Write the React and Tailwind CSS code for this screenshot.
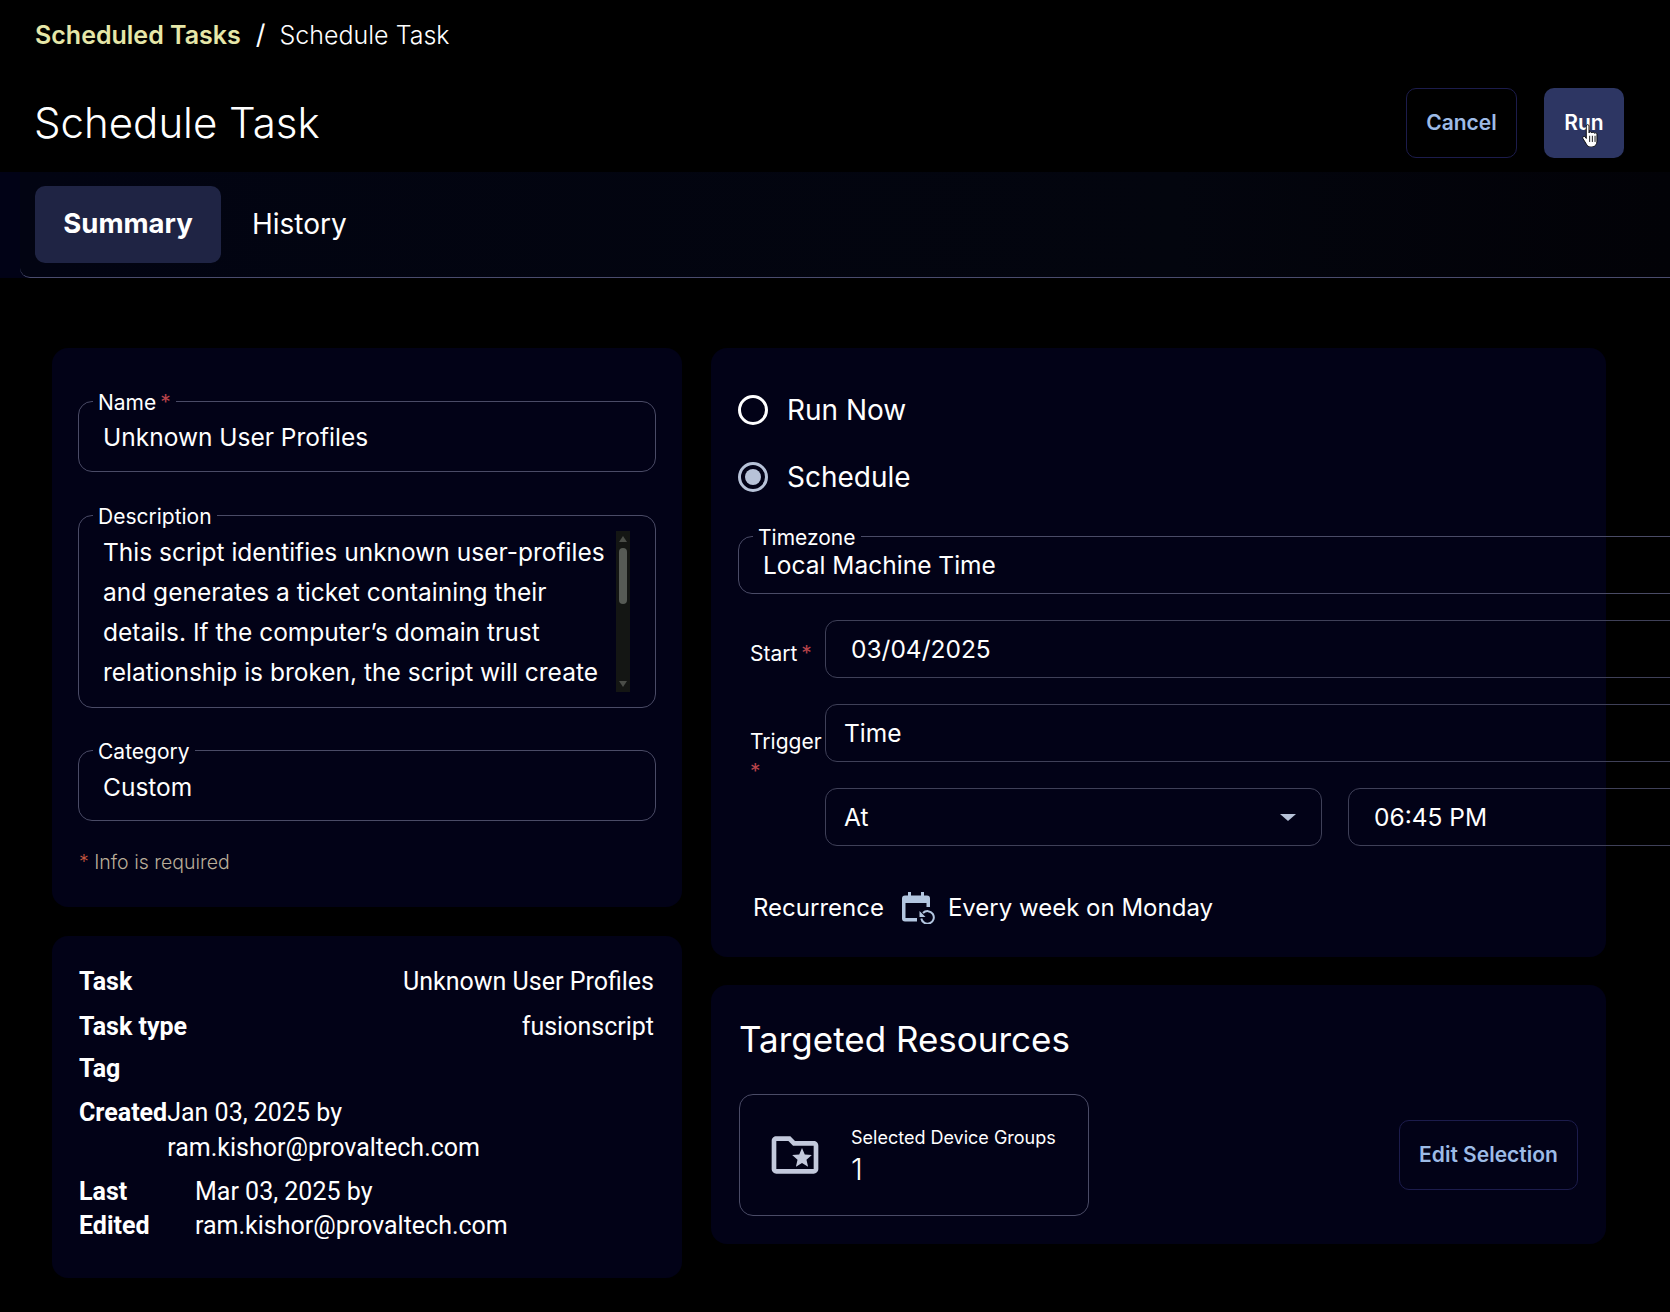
import React from "react";

function Field({ label, required, className, children }) {
  return (
    <fieldset className={`border border-[#4a4b66] rounded-[14px] ${className}`}>
      <legend className="ml-[14px] px-[5px] text-[21px] leading-[24px] font-normal text-white translate-y-[2px]">
        {label}
        {required && <span className="text-[#b8434a] ml-[4px]">*</span>}
      </legend>
      <div className="pl-[24px]">{children}</div>
    </fieldset>
  );
}

function InfoRow({ label, children, labelWidth, right, rowClass }) {
  return (
    <div className={`flex ${right ? "justify-between" : ""} ${rowClass}`}>
      <div className={`font-bold shrink-0 ${labelWidth}`}>{label}</div>
      <div>{children}</div>
    </div>
  );
}

function Box({ className, children }) {
  return (
    <div className={`border border-[#3f4058] rounded-[12px] h-[58px] flex items-center ${className}`}>
      {children}
    </div>
  );
}

function App() {
  return (
    <div className="w-[1670px] h-[1312px] overflow-hidden bg-black text-white font-['Inter',sans-serif]">
      <div className="pl-[35px] pt-[20px] h-[88px] text-[25px] leading-[30px] flex items-start">
        <span className="font-semibold text-[#e6e7a9]">Scheduled Tasks</span>
        <span className="ml-[15px] mr-[14px] text-[27px]">/</span>
        <span className="font-light">Schedule Task</span>
      </div>

      <div className="flex justify-between items-center pl-[34px] pr-[46px] h-[70px] mb-[14px]">
        <h1 className="text-[42px] font-light leading-[50px]">Schedule Task</h1>
        <div className="flex gap-[27px]">
          <button className="w-[111px] h-[70px] rounded-[10px] border border-[#1c1c4c] text-[#9dbbe6] text-[21px] font-semibold">
            Cancel
          </button>
          <button className="relative w-[80px] h-[70px] rounded-[10px] bg-[#2d3663] text-white text-[21px] font-semibold">
            Run
            <svg className="absolute left-[38px] top-[36px]" width="17" height="23" viewBox="1.500 0.500 14.500 20.500">
              <path
                d="M5 2.200c0-1.500 2.400-1.500 2.400 0v6.200c.3-1.300 2.400-1.200 2.500.1.400-1 2.300-.9 2.400.3.500-.7 2.200-.5 2.200.8v6.200c0 2.800-1.600 5.200-4.600 5.200H9c-1.900 0-3-.9-3.900-2.500L2 13.400c-.7-1.400 1-2.500 2-1.400l1 1.400z"
                fill="#fff"
                stroke="#000"
                strokeWidth="0.8"
              />
              <path d="M8 11v5.500M10.400 11v5.500M12.800 11v5.500" stroke="#000" strokeWidth="0.8" />
            </svg>
          </button>
        </div>
      </div>

      <div className="h-[106px] bg-[#010216]">
        <div className="ml-[20px] h-[106px] bg-linear-to-r from-[#020412] via-[#03050e] via-70% to-[#020207] border-b border-[#4a4c6e] rounded-bl-[10px] pl-[15px] pt-[14px] flex items-start gap-[31px]">
          <div className="w-[186px] h-[77px] pb-[1px] rounded-[10px] bg-[#1f2444] flex items-center justify-center text-[27.500px] font-bold">
            Summary
          </div>
          <div className="h-[77px] pb-[2px] flex items-center text-[28px]">History</div>
        </div>
      </div>

      <div className="pl-[52px] pt-[70px] grid grid-cols-[630px_895px] gap-x-[29px] items-start">
        <div className="flex flex-col gap-[29px]">
          <div className="bg-[#020217] rounded-[16px] h-[559px] pt-[41px] px-[26px]">
            <Field label="Name" required className="h-[83px]">
              <div className="text-[24.500px] leading-[36px] pt-[6px]">Unknown User Profiles</div>
            </Field>
            <Field label="Description" className="mt-[31px] h-[205px] relative">
              <div className="text-[24.500px] leading-[40px] w-[512px] h-[160px] pt-[5px] overflow-hidden box-content">
                This script identifies unknown user-profiles and generates a ticket containing their details. If the
                computer’s domain trust relationship is broken, the script will create
              </div>
              <div className="absolute right-[25px] top-[4px] w-[14px] h-[161px] bg-[#141614] flex flex-col items-center">
                <div className="mt-[5px] border-x-[4px] border-x-transparent border-b-[6px] border-b-[#4a4d48]" />
                <div className="mt-[6px] w-[8px] h-[56px] rounded-[4px] bg-[#565a55]" />
                <div className="mt-auto mb-[5px] border-x-[4px] border-x-transparent border-t-[6px] border-t-[#4a4d48]" />
              </div>
            </Field>
            <Field label="Category" className="mt-[30px] h-[83px]">
              <div className="text-[24.500px] leading-[36px] pt-[7px]">Custom</div>
            </Field>
            <div className="mt-[29px] ml-[1px] text-[19.500px] leading-[24px] font-light text-[#b9ad98]">
              <span className="text-[#c4553f]">*</span> Info is required
            </div>
          </div>

          <div className="bg-[#020217] rounded-[16px] h-[342px] pt-[28px] pl-[27px] pr-[28px] text-[25px] leading-[35px] font-['Roboto',sans-serif]">
            <InfoRow label="Task" right rowClass="mb-[10px]">Unknown User Profiles</InfoRow>
            <InfoRow label="Task type" right rowClass="mb-[7px]">fusionscript</InfoRow>
            <InfoRow label="Tag" rowClass="mb-[9px]" />
            <InfoRow label="Created" rowClass="mb-[10px]">
              Jan 03, 2025 by
              <br />
              ram.kishor@provaltech.com
            </InfoRow>
            <InfoRow label="Last Edited" labelWidth="w-[116px]" rowClass="leading-[34px]">
              Mar 03, 2025 by
              <br />
              ram.kishor@provaltech.com
            </InfoRow>
          </div>
        </div>

        <div className="flex flex-col gap-[28px]">
          <div className="bg-[#020217] rounded-[16px] h-[609px] pt-[47px] pl-[27px]">
            <div className="flex items-center gap-[19px] h-[30px] text-[28px]">
              <span className="w-[30px] h-[30px] rounded-full border-[3px] border-white" />
              Run Now
            </div>
            <div className="flex items-center gap-[19px] h-[30px] mt-[37px] text-[28px]">
              <span className="w-[30px] h-[30px] rounded-full border-[3px] border-[#b7c2d8] flex items-center justify-center">
                <span className="w-[16px] h-[16px] rounded-full bg-[#b7c2d8]" />
              </span>
              Schedule
            </div>

            <fieldset className="mt-[32px] w-[1100px] h-[70px] border border-[#4a4b66] rounded-[14px]">
              <legend className="ml-[14px] px-[5px] text-[21px] leading-[24px] translate-y-[2px]">Timezone</legend>
              <div className="pl-[24px] text-[24.500px] leading-[32px] mt-[1px]">Local Machine Time</div>
            </fieldset>

            <div className="flex items-center w-[1100px] mt-[26px]">
              <div className="w-[87px] pl-[12px] pt-[10px] text-[21px]">
                Start<span className="text-[#b8434a] ml-[4px]">*</span>
              </div>
              <Box className="flex-1 pl-[25px] text-[24.500px]">03/04/2025</Box>
            </div>

            <div className="flex w-[1100px] mt-[26px]">
              <div className="w-[87px] pl-[12px] pt-[24px] text-[21px] leading-[28px]">
                Trigger
                <div className="text-[#b8434a] mt-[2px]">*</div>
              </div>
              <div className="flex-1">
                <Box className="pl-[18px] text-[24.500px]">Time</Box>
                <div className="flex gap-[26px] mt-[26px]">
                  <Box className="w-[497px] justify-between pl-[18px] pr-[25px] text-[24.500px]">
                    At
                    <span className="border-x-[8px] border-x-transparent border-t-[7px] border-t-[#b7c2d8]" />
                  </Box>
                  <Box className="flex-1 pl-[25px] text-[24.500px]">06:45 PM</Box>
                </div>
              </div>
            </div>

            <div className="flex items-center mt-[44px] pl-[15px] text-[24px]">
              <span>Recurrence</span>
              <svg className="ml-[18px] mr-[13px]" width="33" height="32" viewBox="0 0 33 32">
                <path
                  d="M6 0h3v3.500h10V0h3v3.500h3a3 3 0 0 1 3 3V15h-3.500v-4H3.500v15H15v3.500H3a3 3 0 0 1-3-3V6.500a3 3 0 0 1 3-3h3z"
                  fill="#b3c6e0"
                />
                <path d="M21 21a6.300 6.300 0 1 1-1.700 5.500" fill="none" stroke="#b3c6e0" strokeWidth="2" />
                <path d="M17.500 19v6h6z" fill="#b3c6e0" />
              </svg>
              <span>Every week on Monday</span>
            </div>
          </div>

          <div className="bg-[#020217] rounded-[16px] h-[259px] pt-[32px] pl-[28px] pr-[28px]">
            <h2 className="text-[35px] leading-[44px] font-normal">Targeted Resources</h2>
            <div className="flex justify-between items-center mt-[33px]">
              <div className="w-[350px] h-[122px] border border-[#4a4b66] rounded-[14px] flex items-center pl-[27px]">
                <svg width="56" height="56" viewBox="0 0 24 24" fill="#c3c9dc">
                  <path d="M20 6h-8l-2-2H4c-1.110 0-1.990.890-1.990 2L2 18c0 1.110.890 2 2 2h16c1.110 0 2-.890 2-2V8c0-1.110-.890-2-2-2zm0 12H4V6h5.170l2 2H20v10zm-6.920-3.960L12.390 17 15 15.470 17.610 17l-.690-2.960 2.300-1.990-3.030-.260L15 9l-1.190 2.790-3.030.260z" />
                </svg>
                <div className="ml-[28px] pt-[2px]">
                  <div className="text-[18px] leading-[26px]">Selected Device Groups</div>
                  <div className="text-[30px] leading-[36px] font-light">1</div>
                </div>
              </div>
              <button className="w-[179px] h-[70px] rounded-[10px] border border-[#1c1c4c] text-[#9dbbe6] text-[21px] font-semibold">
                Edit Selection
              </button>
            </div>
          </div>
        </div>
      </div>
    </div>
  );
}

export default App;
